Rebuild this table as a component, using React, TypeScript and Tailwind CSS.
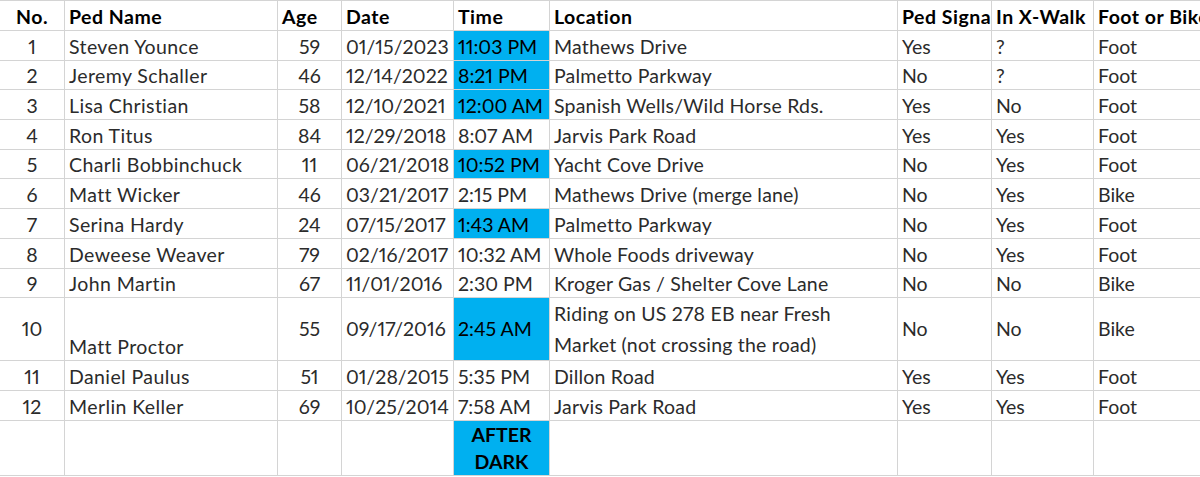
import React from 'react';

type Row = {
  no: string;
  name: string;
  age: string;
  date: string;
  time: string;
  dark: boolean;
  location: string;
  signal: string;
  xwalk: string;
  mode: string;
};

const rows: Row[] = [
  { no: '1', name: 'Steven Younce', age: '59', date: '01/15/2023', time: '11:03 PM', dark: true, location: 'Mathews Drive', signal: 'Yes', xwalk: '?', mode: 'Foot' },
  { no: '2', name: 'Jeremy Schaller', age: '46', date: '12/14/2022', time: '8:21 PM', dark: true, location: 'Palmetto Parkway', signal: 'No', xwalk: '?', mode: 'Foot' },
  { no: '3', name: 'Lisa Christian', age: '58', date: '12/10/2021', time: '12:00 AM', dark: true, location: 'Spanish Wells/Wild Horse Rds.', signal: 'Yes', xwalk: 'No', mode: 'Foot' },
  { no: '4', name: 'Ron Titus', age: '84', date: '12/29/2018', time: '8:07 AM', dark: false, location: 'Jarvis Park Road', signal: 'Yes', xwalk: 'Yes', mode: 'Foot' },
  { no: '5', name: 'Charli Bobbinchuck', age: '11', date: '06/21/2018', time: '10:52 PM', dark: true, location: 'Yacht Cove Drive', signal: 'No', xwalk: 'Yes', mode: 'Foot' },
  { no: '6', name: 'Matt Wicker', age: '46', date: '03/21/2017', time: '2:15 PM', dark: false, location: 'Mathews Drive (merge lane)', signal: 'No', xwalk: 'Yes', mode: 'Bike' },
  { no: '7', name: 'Serina Hardy', age: '24', date: '07/15/2017', time: '1:43 AM', dark: true, location: 'Palmetto Parkway', signal: 'No', xwalk: 'Yes', mode: 'Foot' },
  { no: '8', name: 'Deweese Weaver', age: '79', date: '02/16/2017', time: '10:32 AM', dark: false, location: 'Whole Foods driveway', signal: 'No', xwalk: 'Yes', mode: 'Foot' },
  { no: '9', name: 'John Martin', age: '67', date: '11/01/2016', time: '2:30 PM', dark: false, location: 'Kroger Gas / Shelter Cove Lane', signal: 'No', xwalk: 'No', mode: 'Bike' },
];

const tail: Row[] = [
  { no: '11', name: 'Daniel Paulus', age: '51', date: '01/28/2015', time: '5:35 PM', dark: false, location: 'Dillon Road', signal: 'Yes', xwalk: 'Yes', mode: 'Foot' },
  { no: '12', name: 'Merlin Keller', age: '69', date: '10/25/2014', time: '7:58 AM', dark: false, location: 'Jarvis Park Road', signal: 'Yes', xwalk: 'Yes', mode: 'Foot' },
];

const cell = 'border border-[#d4d4d4] px-[4px] whitespace-nowrap overflow-hidden align-bottom';
const dateCell = 'border border-[#d4d4d4] pl-[4px] pr-0 whitespace-nowrap overflow-hidden align-bottom';
const blue = 'bg-[#00b0f0]';

const Line: React.FC<{ r: Row }> = ({ r }) => (
  <tr className="h-[29.7px]">
    <td className={`${cell} text-center`}>{r.no}</td>
    <td className={`${cell} tracking-[0.4px]`}>{r.name}</td>
    <td className={`${cell} text-center`}>{r.age}</td>
    <td className={dateCell}>{r.date}</td>
    <td className={`${cell} ${r.dark ? blue + ' text-black' : ''}`}>{r.time}</td>
    <td className={`${cell} tracking-[0.2px]`}>{r.location}</td>
    <td className={cell}>{r.signal}</td>
    <td className={cell}>{r.xwalk}</td>
    <td className={cell}>{r.mode}</td>
  </tr>
);

export default function App() {
  return (
    <div className="w-[1200px] h-[477px] overflow-hidden bg-white">
      <table
        className="table-fixed border-collapse w-[1218px] -ml-px text-[19.5px] leading-[26px] text-[#2b2b2b] proportional-nums"
        style={{ fontFamily: 'Lato, "Open Sans", sans-serif' }}
      >
        <colgroup>
          <col className="w-[65px]" />
          <col className="w-[213px]" />
          <col className="w-[64px]" />
          <col className="w-[112px]" />
          <col className="w-[96px]" />
          <col className="w-[348px]" />
          <col className="w-[94px]" />
          <col className="w-[102px]" />
          <col className="w-[124px]" />
        </colgroup>
        <thead>
          <tr className="h-[30px] font-bold text-black tracking-[0.5px]">
            <td className={`${cell} text-center`}>No.</td>
            <td className={cell}>Ped Name</td>
            <td className={cell}>Age</td>
            <td className={cell}>Date</td>
            <td className={cell}>Time</td>
            <td className={cell}>Location</td>
            <td className={`${cell} text-clip`}>Ped Signal</td>
            <td className={cell}>In X-Walk</td>
            <td className={cell}>Foot or Bike</td>
          </tr>
        </thead>
        <tbody>
          {rows.map((r) => (
            <Line key={r.no} r={r} />
          ))}
          <tr className="h-[61px]">
            <td className={`${cell} text-center !align-middle`}>10</td>
            <td className={`${cell} tracking-[0.4px]`}>Matt Proctor</td>
            <td className={`${cell} text-center !align-middle`}>55</td>
            <td className={`${dateCell} !align-middle`}>09/17/2016</td>
            <td className={`${cell} ${blue} text-black !align-middle`}>2:45 AM</td>
            <td className={`${cell} tracking-[0.2px] !whitespace-normal !align-middle leading-[31px]`}>
              Riding on US 278 EB near Fresh Market (not crossing the road)
            </td>
            <td className={`${cell} !align-middle`}>No</td>
            <td className={`${cell} !align-middle`}>No</td>
            <td className={`${cell} !align-middle`}>Bike</td>
          </tr>
          {tail.map((r) => (
            <Line key={r.no} r={r} />
          ))}
          <tr className="h-[55px]">
            <td className={cell}></td>
            <td className={cell}></td>
            <td className={cell}></td>
            <td className={cell}></td>
            <td className={`${cell} ${blue} text-black font-bold text-center !whitespace-normal !align-middle leading-[27px]`}>
              AFTER DARK
            </td>
            <td className={cell}></td>
            <td className={cell}></td>
            <td className={cell}></td>
            <td className={cell}></td>
          </tr>
        </tbody>
      </table>
    </div>
  );
}
